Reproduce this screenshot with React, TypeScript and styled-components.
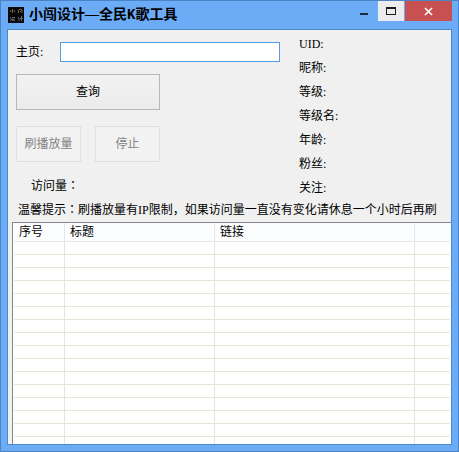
import React from "react";
import styled, { createGlobalStyle } from "styled-components";

const GlobalStyle = createGlobalStyle`
  *, *::before, *::after { box-sizing: border-box; }
  body {
    margin: 0;
    font: 12px/20px "Liberation Serif", "Noto Sans CJK SC", serif;
    color: #000;
  }
  button, input { font: inherit; }
`;

const Window = styled.div`
  display: flex;
  flex-direction: column;
  height: 100vh;
  padding: 0 6px 6px;
  background: #6cacf7;
  border: 1px solid #4b84c4;
`;

const TitleBar = styled.header`
  display: flex;
  flex: none;
  height: 28px;
`;

const Title = styled.h1`
  display: flex;
  flex: 1;
  align-items: center;
  gap: 5px;
  margin: 0;
  padding-left: 1px;
  font-size: 14px;
  line-height: 28px;
  font-weight: bold;
  white-space: nowrap;
`;

const Latin = styled.span`
  font-family: "Liberation Mono", monospace;
`;

const Controls = styled.div`
  display: flex;
  gap: 1px;
  height: 20px;
`;

const ControlButton = styled.button<{ $tone?: "light" | "danger" }>`
  display: flex;
  align-items: center;
  justify-content: center;
  width: ${(p) => (p.$tone === "danger" ? 47 : 26)}px;
  padding: 0;
  border: 0;
  background: ${(p) =>
    p.$tone === "danger" ? "#c75050" : p.$tone === "light" ? "#ececee" : "transparent"};
`;

const Client = styled.main`
  display: flex;
  flex: 1;
  flex-direction: column;
  min-height: 0;
  overflow: hidden;
  background: #f0f0f0;
  border: 1px solid #4f88c6;
`;

const Top = styled.div`
  display: flex;
  flex: none;
  gap: 19px;
  padding: 2px 8px 0;
`;

const Form = styled.form`
  display: flex;
  flex-direction: column;
  flex: 0 0 264px;
  padding-top: 10px;
`;

const Field = styled.div`
  display: flex;
  align-items: center;
`;

const FieldLabel = styled.label`
  width: 44px;
`;

const TextInput = styled.input`
  flex: 1;
  min-width: 0;
  height: 20px;
  padding: 0 4px;
  background: #fff;
  border: 1px solid #569de5;
  outline: none;
`;

const Actions = styled.div`
  display: grid;
  grid-template-columns: 1fr 1fr;
  gap: 16px 14px;
  width: 144px;
  margin: 12px 0 14px;
`;

const PushButton = styled.button<{ $wide?: boolean }>`
  grid-column: ${(p) => (p.$wide ? "1 / -1" : "auto")};
  height: 36px;
  padding: 0;
  color: #000;
  background: linear-gradient(#f2f2f2, #ebebeb);
  border: 1px solid #b8b8b8;
  white-space: nowrap;
  &:disabled {
    color: #838383;
    background: #f2f2f2;
    border-color: #e0e0e0;
  }
`;

const Visits = styled.output`
  padding-left: 15px;
  line-height: 20px;
`;

const Profile = styled.dl`
  flex: 1;
  margin: 0;
`;

const ProfileRow = styled.div`
  display: flex;
  gap: 4px;
  height: 24px;
  line-height: 24px;
  dd { margin: 0; }
`;

const Tip = styled.p`
  flex: none;
  margin: 0 0 2px;
  padding-left: 10px;
  white-space: nowrap;
`;

const Colon = styled.span`
  font-family: "Noto Sans CJK TC", sans-serif;
  line-height: 1;
`;

const ListView = styled.div`
  flex: 1;
  min-height: 0;
  margin-left: 4px;
  padding: 0 1px;
  overflow: hidden;
  background: #fff;
  border: solid #828790;
  border-width: 1px 0 0 1px;
`;

const Table = styled.table`
  width: 100%;
  table-layout: fixed;
  border-collapse: separate;
  border-spacing: 0;
`;

const HeadCell = styled.th<{ $width?: number }>`
  width: ${(p) => (p.$width ? `${p.$width}px` : "auto")};
  height: 19px;
  padding: 0 0 0 5px;
  line-height: 18px;
  font-weight: normal;
  text-align: left;
  background: #fcfdfe;
  border-right: ${(p) => (p.$width ? "1px solid #dfe7f3" : "0")};
  border-bottom: 1px solid #e9e9e2;
`;

const Cell = styled.td`
  height: 13px;
  padding: 0;
  border-right: 1px solid #e6e6d8;
  border-bottom: 1px solid #e6e6d8;
  &:last-child { border-right: 0; }
`;

const columns = [
  { name: "序号", width: 51 },
  { name: "标题", width: 150 },
  { name: "链接", width: 200 },
  { name: "", width: undefined },
];
const profile = ["UID", "昵称", "等级", "等级名", "年龄", "粉丝", "关注"];
const emptyRows = Array.from({ length: 16 }, (_, i) => i);

function AppIcon() {
  return (
    <svg width="16" height="16" viewBox="0 0 16 16" aria-hidden="true">
      <path fill="#07080c" d="M0 0h16v16H0z" />
      <g fill="none" strokeWidth="0.8">
        <path stroke="#97794c" d="M4.500 2v4M2 5l1-2M6 3l1 2M10.500 3v3M11 2.500h3v3.500M12 4.500h1" />
        <path stroke="#7d8583" d="M2 10l1 1v3M4 10.500h3M4 13.500l3-2M4 12l3 2M10 10l1 1v3M12 11.500h3M13.500 9v5" />
      </g>
    </svg>
  );
}

export default function App() {
  return (
    <>
      <GlobalStyle />
      <Window>
        <TitleBar>
          <Title>
            <AppIcon />
            <span>小闯设计—全民<Latin>K</Latin>歌工具</span>
          </Title>
          <Controls>
            <ControlButton type="button" aria-label="最小化">
              <svg width="26" height="20" viewBox="0 0 26 20">
                <path fill="#1b2a3d" d="M9 12h8v2H9z" />
              </svg>
            </ControlButton>
            <ControlButton type="button" aria-label="最大化" $tone="light">
              <svg width="26" height="20" viewBox="0 0 26 20">
                <path fill="#1c1c1c" fillRule="evenodd" d="M8 6h10v8H8zM9 8v5h8V8z" />
              </svg>
            </ControlButton>
            <ControlButton type="button" aria-label="关闭" $tone="danger">
              <svg width="47" height="20" viewBox="0 0 47 20">
                <path stroke="#fff" strokeWidth="1.700" d="M20 7l7 7M27 7l-7 7" />
              </svg>
            </ControlButton>
          </Controls>
        </TitleBar>
        <Client>
          <Top>
            <Form onSubmit={(e) => e.preventDefault()}>
              <Field>
                <FieldLabel htmlFor="home">主页:</FieldLabel>
                <TextInput id="home" type="text" />
              </Field>
              <Actions>
                <PushButton type="submit" $wide>查询</PushButton>
                <PushButton type="button" disabled>刷播放量</PushButton>
                <PushButton type="button" disabled>停止</PushButton>
              </Actions>
              <Visits>访问量<Colon>：</Colon></Visits>
            </Form>
            <Profile>
              {profile.map((name) => (
                <ProfileRow key={name}>
                  <dt>{name}:</dt>
                  <dd />
                </ProfileRow>
              ))}
            </Profile>
          </Top>
          <Tip>
            温馨提示<Colon>：</Colon>刷播放量有IP限制，如果访问量一直没有变化请休息一个小时后再刷
          </Tip>
          <ListView>
            <Table>
              <thead>
                <tr>
                  {columns.map((c) => (
                    <HeadCell key={c.name} $width={c.width}>{c.name}</HeadCell>
                  ))}
                </tr>
              </thead>
              <tbody>
                {emptyRows.map((row) => (
                  <tr key={row}>
                    {columns.map((c) => (
                      <Cell key={c.name} />
                    ))}
                  </tr>
                ))}
              </tbody>
            </Table>
          </ListView>
        </Client>
      </Window>
    </>
  );
}
